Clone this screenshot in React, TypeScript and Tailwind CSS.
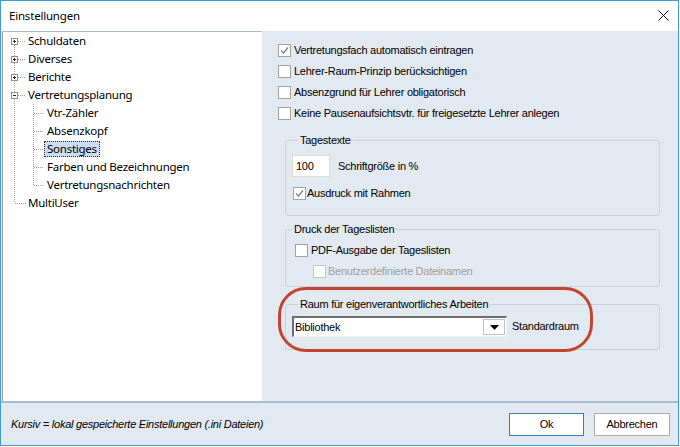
import React from "react";

const ui = "font-['Liberation_Sans',Arial,sans-serif] text-[11px] tracking-[-0.25px] text-black";
const seg = "font-['Noto_Sans',sans-serif] text-[11.5px] tracking-[-0.25px] text-black";

function Check({ checked, disabled }: { checked?: boolean; disabled?: boolean }) {
  return (
    <span
      className={`flex h-[13px] w-[13px] shrink-0 items-center justify-center border bg-white ${
        disabled ? "border-[#b7c8de]" : "border-[#a3a3a3]"
      }`}
    >
      {checked && (
        <svg width="9" height="9" viewBox="0 0 9 9">
          <path d="M1 4.5 L3.5 7 L8 1.5" fill="none" stroke="#808080" strokeWidth="1.3" />
        </svg>
      )}
    </span>
  );
}

function CheckRow({ label, checked, disabled, className = "" }: { label: string; checked?: boolean; disabled?: boolean; className?: string }) {
  return (
    <div className={`flex h-[21px] items-center gap-[3px] ${className}`}>
      <Check checked={checked} disabled={disabled} />
      <span className={disabled ? "text-[#a0a0a0]" : ""}>{label}</span>
    </div>
  );
}

function Expander({ open }: { open?: boolean }) {
  return (
    <svg width="7" height="7" viewBox="0 0 7 7" className="shrink-0">
      <rect x="0.5" y="0.5" width="6" height="6" fill="#fff" stroke="#919191" />
      <path d="M2 3.5 H5" stroke="#2b2b2b" />
      {!open && <path d="M3.5 2 V5" stroke="#2b2b2b" />}
    </svg>
  );
}

const topItems = [
  { label: "Schuldaten", box: true },
  { label: "Diverses", box: true },
  { label: "Berichte", box: true },
  { label: "Vertretungsplanung", box: true, open: true },
];
const children = ["Vtr-Zähler", "Absenzkopf", "Sonstiges", "Farben und Bezeichnungen", "Vertretungsnachrichten"];

function Tree() {
  const dots = "1 1";
  return (
    <div className={`relative ml-px w-[260px] border-l border-t border-l-[#a0a0a0] border-t-[#a7bcd8] bg-white ${seg}`}>
      {/* connector lines */}
      <svg className="absolute left-0 top-0" width="60" height="200">
        <path d="M11.5 9 V171" stroke="#a0a0a0" strokeDasharray={dots} />
        {[0, 1, 2, 3].map((i) => (
          <path key={i} d={`M15 ${9.5 + 18 * i} H23`} stroke="#a0a0a0" strokeDasharray={dots} />
        ))}
        <path d="M12 171.5 H23" stroke="#a0a0a0" strokeDasharray={dots} />
        <path d="M30.5 72 V153" stroke="#a0a0a0" strokeDasharray={dots} />
        {children.map((_, i) => (
          <path key={i} d={`M31 ${81.5 + 18 * i} H40`} stroke="#a0a0a0" strokeDasharray={dots} />
        ))}
      </svg>
      <div className="relative flex flex-col">
        {topItems.map((t) => (
          <div key={t.label} className="flex h-[18px] items-center pl-[8px]">
            <Expander open={t.open} />
            <span className="ml-[10px]">{t.label}</span>
          </div>
        ))}
        {children.map((c) => (
          <div key={c} className="flex h-[18px] items-center pl-[41px]">
            <span
              className={`flex h-[16px] items-center border px-[2px] ${
                c === "Sonstiges" ? "border-dotted border-[#333] bg-[#cddcef]" : "border-transparent"
              }`}
            >
              {c}
            </span>
          </div>
        ))}
        <div className="flex h-[18px] items-center pl-[25px]">MultiUser</div>
      </div>
    </div>
  );
}

export default function App() {
  return (
    <div className="h-[447px] w-[680px] bg-white">
      <div className="flex h-[446px] w-[679px] flex-col border border-[#3f9bd6] bg-[#e2e9f1]">
        {/* title bar */}
        <div className="flex h-[30px] shrink-0 items-center justify-between bg-white pl-[8px] pr-[9px]">
          <span className="font-['Noto_Sans',sans-serif] text-[11.5px] tracking-[-0.2px] text-black">Einstellungen</span>
          <svg width="11" height="11" viewBox="0 0 11 11" className="mb-[2px]">
            <path d="M0.5 0.5 L10.5 10.5 M10.5 0.5 L0.5 10.5" stroke="#111" strokeWidth="1" />
          </svg>
        </div>

        {/* body */}
        <div className="flex h-[370px] shrink-0">
          <Tree />
          <div className={`relative flex flex-1 flex-col pl-[16px] pt-[9px] ${ui}`}>
            <CheckRow label="Vertretungsfach automatisch eintragen" checked />
            <CheckRow label="Lehrer-Raum-Prinzip berücksichtigen" />
            <CheckRow label="Absenzgrund für Lehrer obligatorisch" />
            <CheckRow label="Keine Pausenaufsichtsvtr. für freigesetzte Lehrer anlegen" />

            <fieldset className="ml-[7px] mt-[10px] w-[375px] rounded-[3px] border border-[#c9d2dd] pb-[11px] pl-[6px]">
              <legend className="ml-[6px] px-[2px] leading-[13px]">Tagestexte</legend>
              <div className="mt-[8px] flex items-center gap-[8px]">
                <div className="flex h-[22px] w-[38px] items-center border border-[#dcdcdc] bg-white pl-[3px]">100</div>
                <span>Schriftgröße in %</span>
              </div>
              <CheckRow label="Ausdruck mit Rahmen" checked className="ml-[1px] mt-[6px] !gap-[1px]" />
            </fieldset>

            <fieldset className="ml-[7px] mt-[7px] w-[375px] rounded-[3px] border border-[#c9d2dd] pb-[4px]">
              <legend className="ml-[6px] px-[2px] leading-[13px]">Druck der Tageslisten</legend>
              <CheckRow label="PDF-Ausgabe der Tageslisten" className="ml-[9px] mt-[4px]" />
              <CheckRow label="Benutzerdefinierte Dateinamen" disabled className="ml-[27px] !gap-[2px]" />
            </fieldset>

            <fieldset className="ml-[7px] mt-[11px] w-[375px] rounded-[3px] border border-[#c9d2dd] pb-[12px] pl-[6px]">
              <legend className="ml-[6px] px-[2px] leading-[13px]">Raum für eigenverantwortliches Arbeiten</legend>
              <div className="mt-[5px] flex items-center gap-[5px]">
                <div className="flex h-[21px] w-[215px] items-stretch border-l-2 border-t-2 border-b border-r border-l-[#6d6d6d] border-t-[#6d6d6d] border-b-[#f0f0f0] border-r-[#f0f0f0] bg-white">
                  <span className="flex flex-1 items-center pl-[1px]">Bibliothek</span>
                  <span className="my-px mr-px flex w-[22px] items-center justify-center border border-[#b5c3d5] bg-white">
                    <svg width="9" height="5" viewBox="0 0 9 5">
                      <path d="M0 0 H9 L4.5 5 Z" fill="#000" />
                    </svg>
                  </span>
                </div>
                <span>Standardraum</span>
              </div>
            </fieldset>

            {/* red annotation mark */}
            <div className="absolute left-[16px] top-[256px] h-[65px] w-[315px] rounded-[28px] border-[3px] border-[#c1452f]" />
          </div>
        </div>

        {/* footer */}
        <div className="flex flex-1 items-center justify-between border-t-2 border-[#a9bcd4] pl-[10px] pr-[8px]">
          <span className={`${ui} italic`}>Kursiv = lokal gespeicherte Einstellungen (.ini Dateien)</span>
          <div className="flex gap-[10px]">
            <button className={`h-[23px] w-[75px] border border-[#3c7fb1] bg-white ${ui}`}>Ok</button>
            <button className={`h-[23px] w-[76px] border border-[#adadad] bg-white ${ui}`}>Abbrechen</button>
          </div>
        </div>
      </div>
    </div>
  );
}
